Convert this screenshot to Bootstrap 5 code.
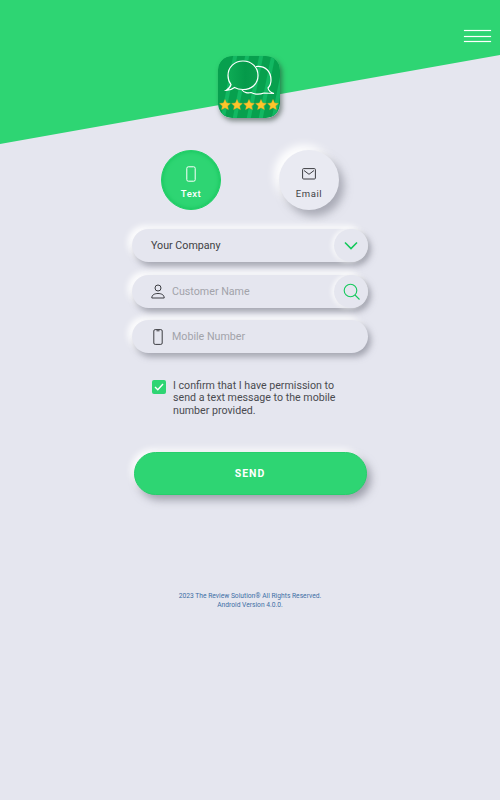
<!DOCTYPE html>
<html lang="en">
<head>
    <meta charset="UTF-8">
    <meta name="viewport" content="width=device-width, initial-scale=1.0">
    <title>Send Review Request</title>
    <link href="https://cdn.jsdelivr.net/npm/bootstrap@5.3.3/dist/css/bootstrap.min.css" rel="stylesheet">
    <style>
        body { background: #e5e6ef; font-family: Roboto, "Liberation Sans", sans-serif; height: 800px; overflow: hidden; color: #404144; }
        .green-wedge { position: absolute; top: 0; left: 0; width: 500px; height: 144px; background: #2ed573; clip-path: polygon(0 0, 100% 0, 100% 55px, 0 100%); }
        .screen { position: relative; width: 500px; height: 800px; }
        .burger { position: absolute; top: 30px; right: 9px; width: 27px; }
        .burger span { display: block; height: 1px; background: #fff; margin-bottom: 4.5px; box-shadow: 0 0 1px #fff; }
        .app-logo { width: 62px; height: 62px; margin-top: 56px; margin-right: 2px; border-radius: 14px; box-shadow: 2px 3px 5px rgba(40, 60, 50, .55); }
        .mode-row { margin-top: 32px; gap: 58px; }
        .mode-btn { width: 60px; height: 60px; border-radius: 50%; font-size: 9.5px; font-weight: 500; letter-spacing: .5px; padding-top: 16px; }
        .mode-icon { height: 16px; margin-bottom: 5px; }
        .mode-on { background: #2ed573; color: #fff; box-shadow: inset 0 0 4px #12c158; padding-top: 15px; border: 1px solid #1fcf66; }
        .mode-off { background: #e9eaf2; color: #404144; box-shadow: 5px 6px 9px rgba(120, 122, 135, .55), -5px -5px 8px #fff; }
        .mode-off span { font-weight: 400; letter-spacing: .6px; }
        .form-col { width: 236px; margin-top: 19px; }
        .pill { height: 33px; border-radius: 17px; background: #e5e6ef; box-shadow: 3px 4px 6px rgba(120, 122, 135, .6), -4px -3px 6px #fff; margin-bottom: 12.5px; padding-left: 19px; font-size: 10.7px; }
        .pill-text { padding-top: 2px; }
        .pill input { border: 0; background: transparent; outline: 0; font-size: 10.7px; width: 150px; padding: 2px 0 0; color: #404144; }
        .pill input::placeholder { color: #a2a3aa; opacity: 1; }
        .pill-icon { width: 14px; margin-right: 7px; }
        .round-end { position: absolute; right: 0; top: 0; width: 34px; height: 33px; border-radius: 50%; background: #e5e6ef; box-shadow: -2px 0 5px rgba(255, 255, 255, .9), 1px 1px 3px rgba(120, 122, 135, .25); }
        .confirm { width: 236px; margin-top: 13px; padding-left: 20px; padding-right: 30px; gap: 7px; font-size: 10.65px; line-height: 12.5px; color: #4a4b50; }
        .confirm-text { padding-top: 1px; }
        .tick-box { width: 14px; height: 14px; flex: none; margin-top: 1px; background: #2ed573; border-radius: 2px; }
        .send-btn { width: 233px; height: 43px; margin-top: 35px; border-radius: 22px; background: #2ed573; color: #fff; border: 1px solid #26cf6b; font-size: 10.5px; font-weight: 700; letter-spacing: 1px; box-shadow: 4px 5px 8px rgba(120, 122, 135, .65), -3px -3px 6px #fff; }
        .send-btn:hover { background: #2ed573; color: #fff; }
        .copyright { margin-top: 97px; font-size: 6.7px; line-height: 9px; color: #3d6fa5; }
    </style>
</head>
<body>
<div class="screen d-flex flex-column align-items-center">
    <div class="green-wedge"></div>
    <div class="burger"><span></span><span></span><span></span></div>

    <svg class="app-logo position-relative" viewBox="0 0 62 62">
        <defs>
            <linearGradient id="bub" x1="0" x2="1" y1="0" y2="0">
                <stop offset="0" stop-color="#0fae57"/>
                <stop offset=".6" stop-color="#059a4a"/>
                <stop offset="1" stop-color="#0a9f4e"/>
            </linearGradient>
            <clipPath id="round"><rect width="62" height="62" rx="14"/></clipPath>
        </defs>
        <g clip-path="url(#round)">
            <rect width="62" height="62" fill="#07a04e"/>
            <g stroke="#12b862" stroke-width="4">
                <path d="M4 66 L18 -4"/><path d="M16 66 L30 -4"/><path d="M30 66 L44 -4"/><path d="M42 66 L56 -4"/><path d="M55 66 L69 -4"/>
            </g>
        </g>
        <path d="M38 10.500 C47 9.500 53 15 53 24 C53 28 51.500 30.500 50 32 C50.500 34.500 52.500 36.500 56 37.500 L46 37 C42 38.500 37 38.500 33 36.500 C30 37.500 26 36.500 24 34" fill="none" stroke="#fff" stroke-width="1.200"/>
        <path d="M25 5 C33.500 5 40 11 40 19.500 C40 28 33.500 33.500 25 33.500 C21.500 33.500 19 33 16.500 31.500 C14 33.500 11 34.500 8 34.500 C10.500 33 12.500 30.500 13 28.500 C11 26 10 23 10 19.500 C10 11 16.500 5 25 5 Z" fill="url(#bub)" stroke="#fff" stroke-width="1.200"/>
        <g fill="#fdc52b" stroke="#f7a823" stroke-width=".4">
            <path id="st" d="M7 43.500 l1.600 3.500 3.800 .4 -2.800 2.500 .8 3.700 -3.400 -1.900 -3.400 1.900 .8 -3.700 -2.800 -2.500 3.800 -.4 Z"/>
            <use href="#st" x="12"/><use href="#st" x="24"/><use href="#st" x="36"/><use href="#st" x="48"/>
        </g>
    </svg>

    <div class="mode-row d-flex position-relative">
        <div class="mode-btn mode-on d-flex flex-column align-items-center">
            <svg class="mode-icon" width="10" viewBox="0 0 10 16" fill="none" stroke="#fff" stroke-width="1"><rect x=".8" y=".8" width="8.400" height="14.400" rx="1.500"/></svg>
            <span>Text</span>
        </div>
        <div class="mode-btn mode-off d-flex flex-column align-items-center">
            <svg class="mode-icon" width="14" viewBox="0 0 14 16" fill="none" stroke="#3c3d42" stroke-width="1"><rect x=".6" y="2.600" width="12.800" height="10.400" rx="1"/><path d="M2 4.500 L7 8.300 L12 4.500"/></svg>
            <span>Email</span>
        </div>
    </div>

    <div class="form-col position-relative">
        <div class="pill d-flex align-items-center position-relative">
            <span class="pill-text">Your Company</span>
            <div class="round-end d-flex align-items-center justify-content-center">
                <svg width="14" height="9" viewBox="0 0 14 9" fill="none" stroke="#14c95c" stroke-width="1.600"><path d="M1 1.500 L7 7.500 L13 1.500"/></svg>
            </div>
        </div>
        <div class="pill d-flex align-items-center position-relative">
            <svg class="pill-icon" height="15" viewBox="0 0 14 15" fill="none" stroke="#3c3d42" stroke-width="1"><circle cx="7" cy="4" r="3"/><path d="M.8 14 C.8 10.500 4 9.500 7 9.500 C10 9.500 13.200 10.500 13.200 14 Z"/></svg>
            <input type="text" placeholder="Customer Name">
            <div class="round-end d-flex align-items-center justify-content-center">
                <svg width="17" height="17" viewBox="0 0 17 17" fill="none" stroke="#14c95c" stroke-width="1.100"><circle cx="7.500" cy="7.500" r="6.300"/><path d="M12 12 L16.500 16.500"/></svg>
            </div>
        </div>
        <div class="pill d-flex align-items-center position-relative">
            <svg class="pill-icon" height="16" viewBox="0 0 14 16" fill="none" stroke="#3c3d42" stroke-width="1"><rect x="2.800" y=".6" width="8.400" height="14.800" rx="1.400"/><path d="M5.500 1.800 H8.500"/></svg>
            <input type="text" placeholder="Mobile Number">
        </div>
    </div>

    <div class="confirm d-flex">
        <div class="tick-box d-flex align-items-center justify-content-center">
            <svg width="10" height="8" viewBox="0 0 10 8" fill="none" stroke="#fff" stroke-width="1.400"><path d="M1 4 L3.800 6.800 L9 1"/></svg>
        </div>
        <div class="confirm-text">I confirm that I have permission to send a text message to the mobile number provided.</div>
    </div>

    <button type="button" class="btn send-btn">SEND</button>

    <div class="copyright text-center">2023 The Review Solution® All Rights Reserved.<br>Android Version 4.0.0.</div>
</div>
<script src="https://cdn.jsdelivr.net/npm/bootstrap@5.3.3/dist/js/bootstrap.bundle.min.js"></script>
</body>
</html>
